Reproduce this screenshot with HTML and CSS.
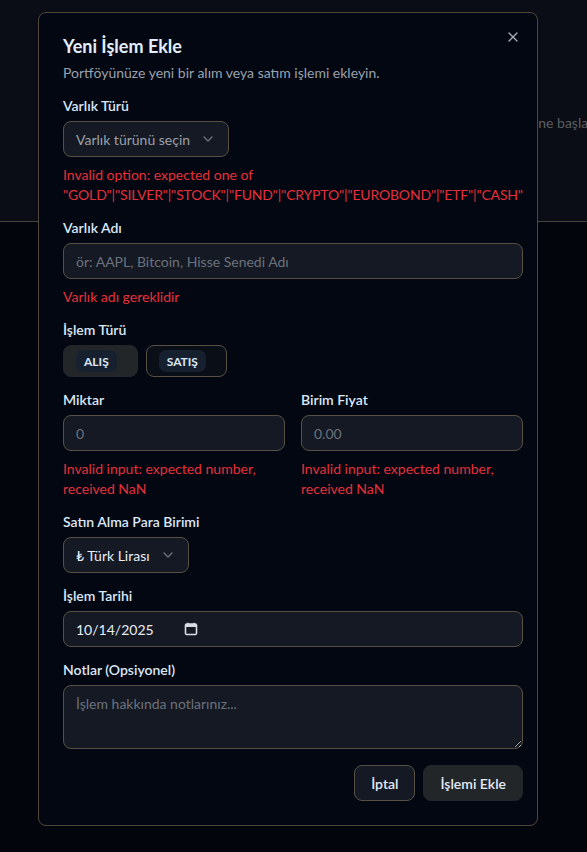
FILE: index.html
```html
<!DOCTYPE html>
<html lang="tr">
<head>
<meta charset="utf-8">
<title>Yeni İşlem Ekle</title>
<link rel="stylesheet" href="styles.css">
</head>
<body>
<div class="page">
  <header class="page-head">
    <p class="page-hint">Portföy takibine başla</p>
  </header>
  <main class="page-body"></main>
</div>
<div class="overlay"></div>
<div class="dialog" role="dialog" aria-labelledby="dlg-title">
  <button class="close" type="button" aria-label="Kapat">
    <svg width="16" height="16" viewBox="0 0 24 24" fill="none" stroke="currentColor" stroke-width="2" stroke-linecap="round" stroke-linejoin="round"><path d="M18 6 6 18"/><path d="m6 6 12 12"/></svg>
  </button>
  <div class="dlg-head">
    <h2 id="dlg-title" class="dlg-title">Yeni İşlem Ekle</h2>
    <p class="dlg-desc">Portföyünüze yeni bir alım veya satım işlemi ekleyin.</p>
  </div>
  <form class="form">
    <div class="field">
      <label class="label">Varlık Türü</label>
      <button type="button" class="select">
        <span class="select-ph">Varlık türünü seçin</span>
        <svg class="chev" width="16" height="16" viewBox="0 0 24 24" fill="none" stroke="currentColor" stroke-width="2" stroke-linecap="round" stroke-linejoin="round"><path d="m6 9 6 6 6-6"/></svg>
      </button>
      <p class="err">Invalid option: expected one of <span class="err-list">"GOLD"|"SILVER"|"STOCK"|"FUND"|"CRYPTO"|"EUROBOND"|"ETF"|"CASH"</span></p>
    </div>
    <div class="field">
      <label class="label">Varlık Adı</label>
      <input class="input" type="text" placeholder="ör: AAPL, Bitcoin, Hisse Senedi Adı">
      <p class="err">Varlık adı gereklidir</p>
    </div>
    <div class="field">
      <label class="label">İşlem Türü</label>
      <div class="seg">
        <button type="button" class="seg-btn is-active"><span class="badge">ALIŞ</span></button>
        <button type="button" class="seg-btn"><span class="badge">SATIŞ</span></button>
      </div>
    </div>
    <div class="grid2">
      <div class="field">
        <label class="label">Miktar</label>
        <input class="input" type="text" placeholder="0">
        <p class="err">Invalid input: expected number, received NaN</p>
      </div>
      <div class="field">
        <label class="label">Birim Fiyat</label>
        <input class="input" type="text" placeholder="0.00">
        <p class="err">Invalid input: expected number, received NaN</p>
      </div>
    </div>
    <div class="field">
      <label class="label">Satın Alma Para Birimi</label>
      <button type="button" class="select select-val">
        <span>₺ Türk Lirası</span>
        <svg class="chev" width="16" height="16" viewBox="0 0 24 24" fill="none" stroke="currentColor" stroke-width="2" stroke-linecap="round" stroke-linejoin="round"><path d="m6 9 6 6 6-6"/></svg>
      </button>
    </div>
    <div class="field">
      <label class="label">İşlem Tarihi</label>
      <div class="input date">
        <span>10/14/2025</span>
        <svg class="cal" width="14" height="14" viewBox="0 0 14 14" fill="none"><rect x="1.5" y="2" width="11" height="10.5" rx="1.2" stroke="currentColor" stroke-width="1.6"/><rect x="1.5" y="2" width="11" height="3" fill="currentColor"/><path d="M4 0.8v2M10 0.8v2" stroke="currentColor" stroke-width="1.4"/></svg>
      </div>
    </div>
    <div class="field">
      <label class="label">Notlar (Opsiyonel)</label>
      <textarea class="input textarea" placeholder="İşlem hakkında notlarınız..."></textarea>
    </div>
    <div class="foot">
      <button type="button" class="btn btn-outline">İptal</button>
      <button type="button" class="btn btn-solid">İşlemi Ekle</button>
    </div>
  </form>
</div>
</body>
</html>
```
FILE: styles.css
```css
* { box-sizing: border-box; }
html, body { margin: 0; padding: 0; }
body {
  font-family: "Lato", "Noto Sans", sans-serif;
  background: #070a1b;
  color: #e2ecf8;
  width: 587px;
  height: 852px;
  overflow: hidden;
}
.page { min-height: 852px; }
.page-head {
  height: 222px;
  background: #151a2a;
  border-bottom: 1px solid #958570;
  padding-top: 114px;
}
.page-hint {
  margin: 0 0 0 456px;
  white-space: nowrap;
  font-size: 14px;
  color: #b4b8bf;
}
.overlay {
  position: fixed;
  inset: 0;
  background: rgba(0, 0, 0, 0.5);
}
.dialog {
  position: fixed;
  left: 38px;
  top: 12px;
  width: 500px;
  height: 814px;
  background: #030712;
  border: 1px solid #4f473a;
  border-radius: 8px;
  padding: 24px 14px 24px 24px;
  display: flex;
  flex-direction: column;
  gap: 16px;
}
.close {
  position: absolute;
  top: 16px;
  right: 16px;
  background: none;
  border: 0;
  padding: 0;
  color: #a3abb6;
  width: 16px;
  height: 16px;
  display: flex;
}
.dlg-head { display: flex; flex-direction: column; gap: 8px; }
.dlg-title {
  margin: 0;
  font-size: 18px;
  line-height: 18px;
  font-weight: 700;
  color: #e3eefa;
}
.dlg-desc {
  margin: 0;
  font-size: 14px;
  line-height: 20px;
  color: #9aa2ad;
}
.form { display: flex; flex-direction: column; gap: 16px; }
.field { display: flex; flex-direction: column; gap: 8px; min-width: 0; }
.label {
  font-size: 14px;
  line-height: 14px;
  font-weight: 600;
  color: #dce8f6;
}
.err {
  margin: 0;
  font-size: 14px;
  line-height: 20px;
  color: #e5303a;
}
.err-list { letter-spacing: -0.17px; }
.input, .select {
  height: 36px;
  border: 1px solid #585143;
  border-radius: 8px;
  background: #141923;
  font: inherit;
  font-size: 14px;
  color: #e2ecf8;
  padding: 0 12px;
  width: 100%;
  outline: none;
}
.input::placeholder { color: #6b717c; }
.select {
  width: auto;
  align-self: flex-start;
  display: flex;
  align-items: center;
  gap: 8px;
}
.select-ph { color: #9aa1aa; }
.select-val { color: #e8eef6; }
.chev { opacity: 0.55; color: #b6bcc6; margin-left: 2px; }
.seg { display: flex; gap: 8px; }
.seg-btn {
  height: 32px;
  border-radius: 8px;
  border: 1px solid #585143;
  background: #0a0e17;
  padding: 0 20px 0 12px;
  display: flex;
  align-items: center;
  font: inherit;
}
.seg-btn.is-active {
  background: #232629;
  border-color: #232629;
}
.badge {
  display: inline-flex;
  align-items: center;
  height: 22px;
  padding: 0 8px;
  border-radius: 7px;
  background: #16202e;
  color: #dce8f6;
  font-size: 12px;
  font-weight: 700;
}
.grid2 { display: grid; grid-template-columns: 1fr 1fr; gap: 16px; }
.date {
  display: flex;
  align-items: center;
  gap: 30px;
  color: #e8eef6;
}
.cal { color: #d9dde3; }
.textarea {
  height: 64px;
  padding: 8px 12px;
  resize: vertical;
  line-height: 20px;
  display: block;
}
.foot { display: flex; justify-content: flex-end; gap: 8px; }
.btn {
  height: 36px;
  padding: 0 16px;
  border-radius: 8px;
  font: inherit;
  font-size: 14px;
  font-weight: 600;
  color: #e3edf8;
}
.btn-outline { background: #141923; border: 1px solid #585143; }
.btn-solid { background: #232629; border: 1px solid #232629; }
```
